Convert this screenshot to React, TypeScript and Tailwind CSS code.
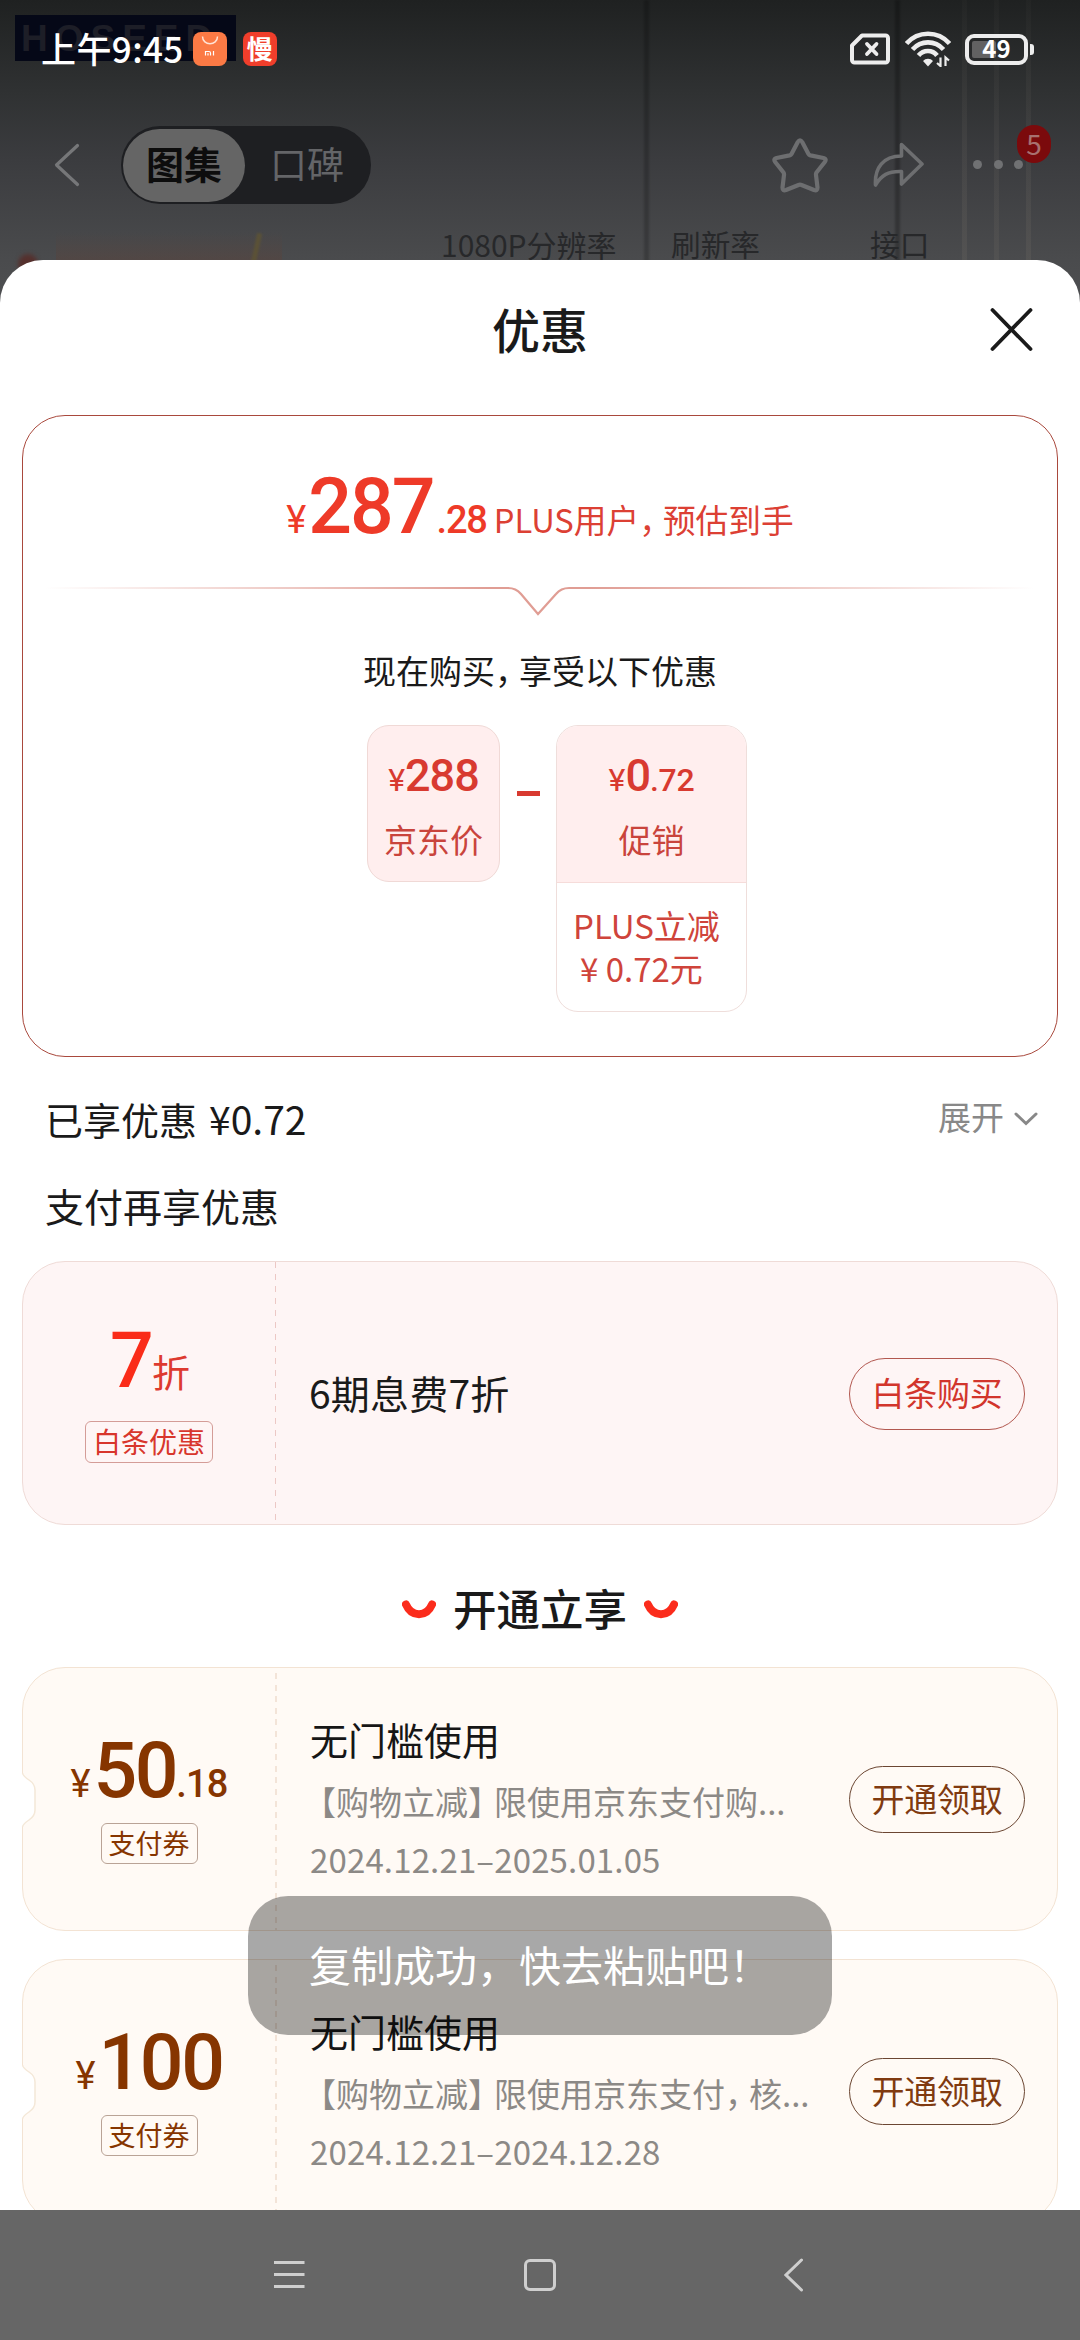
import type { ReactNode } from 'react';

function StatusBar() {
  return (
    <div className="relative flex h-[98px] items-center pl-[41px] pr-[46px] text-white">
      <span className="pb-[3px] text-[35px] font-medium leading-none tracking-[0.4px]">上午9:45</span>
      <svg className="ml-[9px]" width="34" height="34" viewBox="0 0 34 34">
        <rect width="34" height="34" rx="8" fill="#fb7a45" />
        <path d="M9.5 4.5c0 9.500 15 9.500 15 0" fill="none" stroke="#ffe3d5" strokeWidth="1.500" />
        <path d="M12.500 23.500v-4h3.500q1.500 0 1.500 1.500v2.500M15 23.500v-2.300M20.500 19v4.500" fill="none" stroke="#fff" strokeWidth="1.200" />
      </svg>
      <span className="ml-4 flex size-[34px] items-center justify-center rounded-[8px] bg-[#f03e2b] pb-[3px] text-[26px] font-bold leading-none">
        慢
      </span>
      <svg className="ml-auto" width="40" height="32" viewBox="0 0 40 32" fill="none" stroke="#ededed">
        <path d="M12 2.500H35.500a2.500 2.500 0 0 1 2.500 2.500V27a2.500 2.500 0 0 1-2.500 2.500H4.500A2.500 2.500 0 0 1 2 27V12.500Z" strokeWidth="4" strokeLinejoin="round" />
        <path d="M17 11l9.500 10M26.500 11l-9.500 10" strokeWidth="3.800" strokeLinecap="round" />
      </svg>
      <svg className="ml-[15px]" width="46" height="36" viewBox="0 0 46 36" fill="none" stroke="#ededed" strokeWidth="4.600">
        <path d="M1.500 12.500C13 -0.500 33 -0.500 44.500 12.500" />
        <path d="M7.500 18.500C16 9 30 9 38.500 18.500" />
        <path d="M13.500 24.500C18.500 18.500 27.500 18.500 32 24.500" />
        <path d="M18 30a6.500 6.500 0 0 1 10 0l-5 5.500z" fill="#ededed" stroke="none" />
        <path d="M35.500 26.500v8.500l-3.500-3M40.500 35v-8.500l3.500 3" strokeWidth="2.200" />
      </svg>
      <div className="ml-[14px] flex items-center">
        <div className="relative flex h-[31px] w-[63px] items-center justify-center rounded-[9px] border-[4px] border-[#ededed] p-[3px]">
          <span className="absolute left-[3px] top-[3px] h-[17px] w-[24px] rounded-[2px] bg-[#626262]" />
          <span className="relative pb-[2px] text-[24px] font-bold leading-none">49</span>
        </div>
        <span className="ml-[2px] h-[11px] w-[4px] rounded-r-[3px] bg-[#ededed]" />
      </div>
    </div>
  );
}

function Backdrop() {
  return (
    <div className="absolute inset-x-0 top-0 h-[320px] overflow-hidden bg-[linear-gradient(180deg,#1f2121_0px,#2f3132_90px,#3b3c3f_160px,#4a4b4d_260px,#505153_320px)]">
      <div className="absolute left-[15px] top-[15px] flex h-[46px] w-[221px] items-center overflow-hidden bg-[#050817] pl-[6px] font-['Liberation_Sans'] text-[37px] font-bold leading-none tracking-[7px] text-[#1d1e27]">
        HOSEED
      </div>
      <div className="absolute left-[644px] top-0 h-full w-[5px] bg-black/20 blur-[1px]" />
      <div className="absolute left-[895px] top-0 h-full w-[5px] bg-black/25 blur-[1px]" />
      <div className="absolute left-[962px] top-0 h-full w-[5px] bg-[linear-gradient(180deg,rgba(106,102,96,0.05),rgba(106,102,96,0.35))]" />
      <div className="absolute left-[994px] top-0 h-full w-[5px] bg-[linear-gradient(180deg,rgba(106,102,96,0.05),rgba(106,102,96,0.3))]" />
      <div className="absolute left-[1026px] top-0 h-full w-[5px] bg-[linear-gradient(180deg,rgba(106,102,96,0.05),rgba(106,102,96,0.35))]" />
      <div className="absolute left-[56px] top-[232px] h-[28px] w-[226px] bg-[linear-gradient(180deg,transparent,rgba(90,66,58,0.45))]" />
      <div className="absolute left-[254px] top-[233px] h-[30px] w-[5px] rotate-[12deg] bg-[#5e5432]/80 blur-[1px]" />
      <div className="absolute left-[18px] top-[254px] size-[20px] rounded-full bg-[#55302d] blur-[2px]" />
      <span className="absolute left-[441px] top-[229px] text-[30px] leading-none text-[#27282a]">1080P分辨率</span>
      <span className="absolute left-[671px] top-[229px] text-[29.7px] leading-none text-[#27282a]">刷新率</span>
      <span className="absolute left-[870px] top-[229px] text-[29.7px] leading-none text-[#27282a]">接口</span>
    </div>
  );
}

function TopBar() {
  return (
    <div className="relative flex h-[162px] pl-[54px]">
      <svg className="mt-[45px]" width="28" height="44" viewBox="0 0 28 44" fill="none" stroke="#767779" strokeWidth="3.200" strokeLinecap="round" strokeLinejoin="round">
        <path d="M23.500 2.500L2.500 22L23.500 41.500" />
      </svg>
      <div className="ml-[39px] mt-[28px] flex h-[78px] w-[250px] items-center rounded-full bg-[#1e1f22] p-[2px]">
        <span className="flex h-[73px] w-[122px] items-center justify-center rounded-full bg-[#656565] pb-1 text-[38px] font-bold leading-none text-[#0d0d0d]">图集</span>
        <span className="flex flex-1 items-center justify-center pb-1 text-[37px] leading-none text-[#646568]">口碑</span>
      </div>
      <svg className="ml-[401px] mt-[39px]" width="56" height="56" viewBox="0 0 56 56" fill="none" stroke="#6d6e70" strokeWidth="4.200" strokeLinejoin="round">
        <path d="M25.800 5Q28 1.500 30.200 5L36.500 17Q37 18 38.500 18.400L51.500 21Q55 22 52.800 25L44.500 35.500Q43.800 36.500 44 38L45.500 50.500Q45.500 54.300 42 53L29.500 48Q28 47.400 26.500 48L14 53Q10.500 54.300 10.500 50.500L12 38Q12.200 36.500 11.500 35.500L3.200 25Q1 22 4.500 21L17.500 18.400Q19 18 19.500 17Z" />
      </svg>
      <svg className="ml-[45px] mt-[44px]" width="52" height="46" viewBox="0 0 52 46" fill="none" stroke="#6d6e70" strokeWidth="3.600" strokeLinejoin="round">
        <path d="M28.500 2.500L49 22L28.500 42V29.500C15 29 8.500 33 2.500 43C1.500 26 10 14 28.500 14Z" />
      </svg>
      <div className="relative ml-[48px] mt-[62px] flex h-[10px] gap-[11.500px]">
        <span className="size-[9px] rounded-full bg-[#707173]" />
        <span className="size-[9px] rounded-full bg-[#707173]" />
        <span className="size-[9px] rounded-full bg-[#707173]" />
        <span className="absolute -top-[35px] left-[44px] flex h-[38px] w-[34px] items-center justify-center rounded-full bg-[#7b0a0c] pb-[3px] text-[28px] leading-none text-[#a7716f]">5</span>
      </div>
    </div>
  );
}

function Comma() {
  return <span className="tracking-[-9px]">，</span>;
}

function PriceCard() {
  return (
    <section className="mx-[22px] h-[642px] shrink-0 rounded-[43px] border border-[#a9493d]">
      <div className="flex h-[168px] justify-center pt-[64px] text-[#ee3a28]">
        <p className="whitespace-nowrap font-['Roboto'] text-[77px] font-medium leading-[55px]">
          <span className="mr-[2px] text-[38px] font-normal leading-none">¥</span>
          <span className="tracking-[-2px]">287</span>
          <span className="ml-[3px] text-[38px] leading-none tracking-[-1.200px]">.28</span>
          <span className="ml-[7px] font-['Noto_Sans_CJK_SC'] text-[32.7px] font-normal leading-none text-[#dc4034]">
            PLUS用户<Comma />预估到手
          </span>
        </p>
      </div>
      <svg className="ml-[22px]" width="990" height="34" viewBox="0 0 990 34" fill="none">
        <defs>
          <linearGradient id="fade" gradientUnits="userSpaceOnUse" x1="0" y1="0" x2="990" y2="0">
            <stop offset="0" stopColor="#e09d94" stopOpacity="0" />
            <stop offset="0.450" stopColor="#e09d94" />
            <stop offset="0.550" stopColor="#e09d94" />
            <stop offset="1" stopColor="#e09d94" stopOpacity="0" />
          </linearGradient>
        </defs>
        <path d="M0 4H463Q471 4 476 10L493 30L511 10Q516 4 524 4H990" stroke="url(#fade)" strokeWidth="2.200" />
      </svg>
      <p className="mb-[31px] mt-[21px] h-[55px] text-center text-[33px] leading-[62px] text-[#1a1a1a]">
        现在购买<Comma />享受以下优惠
      </p>
      <div className="flex items-start pl-[344px] text-[#d83a30]">
        <div className="flex h-[157px] w-[133px] flex-col items-center rounded-[22px] border border-[#f0d9d6] bg-[#ffeeee]">
          <p className="mt-[30px] h-[51px] whitespace-nowrap font-['Roboto'] text-[45px] font-medium leading-[40px]">
            <span className="text-[32px] font-normal leading-none">¥</span>
            <span className="tracking-[-1px]">288</span>
          </p>
          <p className="text-[33px] leading-[64px] text-[#c9443c]">京东价</p>
        </div>
        <span className="ml-[17px] mt-[66px] h-[5px] w-[23px] bg-[#d83a30]" />
        <div className="ml-[16px] h-[287px] w-[191px] overflow-hidden rounded-[22px] border border-[#efdedb] bg-white">
          <div className="flex h-[157px] flex-col items-center border-b border-[#f6dcda] bg-[#ffeeee]">
            <p className="mt-[30px] h-[51px] whitespace-nowrap font-['Roboto'] text-[45px] font-medium leading-[40px]">
              <span className="text-[32px] font-normal leading-none">¥</span>
              <span className="tracking-[-1px]">0</span>
              <span className="text-[32px] leading-none tracking-[-0.300px]">.72</span>
            </p>
            <p className="text-[33px] leading-[64px] text-[#c9443c]">促销</p>
          </div>
          <div className="pt-[21px] text-[33px] leading-[43px] text-[#cf443b]">
            <p className="pl-[16px]">PLUS立减</p>
            <p className="pl-[23px]">¥ 0.72元</p>
          </div>
        </div>
      </div>
    </section>
  );
}

function DashedLine({ color }: { color: 'rose' | 'sand' }) {
  return color === 'rose' ? (
    <span className="h-full w-px bg-[repeating-linear-gradient(180deg,#ecc8c5_0px,#ecc8c5_6px,transparent_6px,transparent_12px)]" />
  ) : (
    <span className="h-full w-[2px] bg-[repeating-linear-gradient(180deg,transparent_0px,transparent_5px,#f3e4d8_5px,#f3e4d8_11px,transparent_11px,transparent_11.6px)]" />
  );
}

function Notch() {
  return (
    <svg className="absolute -left-[2px] top-[104px]" width="18" height="56" viewBox="0 0 18 56">
      <path d="M0 1H1.500Q2 4 8 8Q14 12 14 18V38Q14 44 8 48Q2 52 1.500 55H0Z" fill="#fff" />
      <path d="M1.500 1Q2 4 8 8Q14 12 14 18V38Q14 44 8 48Q2 52 1.500 55" fill="none" stroke="#f4e8d8" strokeWidth="1.500" />
    </svg>
  );
}

type VoucherProps = { amount: ReactNode; desc: ReactNode; dates: string };

function Voucher({ amount, desc, dates }: VoucherProps) {
  return (
    <section className="relative mx-[22px] flex h-[264px] shrink-0 rounded-[43px] border border-[#f3e3d3] bg-[#fffaf5]">
      <Notch />
      <div className="flex w-[252px] flex-col items-center pt-[76px] text-[#863500]">
        <p className="h-[54px] whitespace-nowrap font-['Roboto'] text-[77px] font-medium leading-[55px]">
          <span className="mr-[3px] text-[38px] font-normal leading-none">¥</span>
          <span className="tracking-[-2.400px]">{amount}</span>
        </p>
        <span className="mt-[25px] flex h-[41px] w-[97px] items-center justify-center rounded-[6px] border border-[#b9a396] pb-[3px] text-[27px] leading-none">
          支付券
        </span>
      </div>
      <DashedLine color="sand" />
      <div className="flex-1 whitespace-nowrap pl-[33px] pt-[40px]">
        <p className="text-[38px] leading-[61px] text-[#161616]">无门槛使用</p>
        <p className="text-[33px] leading-[64px] text-[#8c8986]">
          <span className="-ml-[7px]">【</span>购物立减<span className="tracking-[-7px]">】</span>
          {desc}
        </p>
        <p className="text-[33px] leading-[52px] tracking-[0.150px] text-[#8c8986]">{dates}</p>
      </div>
      <button className="mr-[32px] mt-[98px] h-[67px] w-[176px] rounded-full border border-[#6b4632] pb-[3px] text-[33px] leading-none tracking-[-0.300px] text-[#803a10]">
        开通领取
      </button>
    </section>
  );
}

function Smile() {
  return (
    <svg width="34" height="20" viewBox="0 0 34 20" fill="none">
      <path d="M4 4.500C9.500 17.500 24.500 17.500 30 4.500" stroke="#fb2c1c" strokeWidth="8" strokeLinecap="round" />
    </svg>
  );
}

function Sheet() {
  return (
    <main className="relative flex h-[1950px] flex-col overflow-hidden rounded-t-[43px] bg-white text-[#1a1a1a]">
      <header className="relative flex h-[155px] shrink-0 justify-center">
        <h1 className="text-[48px] font-medium leading-[136px]">优惠</h1>
        <svg className="absolute left-[989px] top-[46px]" width="45" height="46" viewBox="0 0 45 46" stroke="#1a1a1a" strokeWidth="3.800" strokeLinecap="round">
          <path d="M3.500 4L41.500 43M41.500 4L3.500 43" />
        </svg>
      </header>
      <PriceCard />
      <div className="mt-[17px] flex h-[88px] shrink-0 items-center pl-[45px] pr-[42px]">
        <span className="text-[38px] leading-none">
          已享优惠<span className="ml-[12px] text-[39px]">¥0.72</span>
        </span>
        <span className="ml-auto pb-[4px] text-[33px] leading-none text-[#888]">展开</span>
        <svg className="ml-[10px] mt-[1px]" width="24" height="14" viewBox="0 0 24 14" fill="none" stroke="#888" strokeWidth="3" strokeLinecap="round">
          <path d="M2 2L12 11.500L22 2" />
        </svg>
      </div>
      <h2 className="h-[99px] shrink-0 pl-[45px] text-[39px] leading-[86px]">支付再享优惠</h2>
      <section className="mx-[22px] flex h-[264px] shrink-0 rounded-[43px] border border-[#efdbd7] bg-[#fef5f5]">
        <div className="flex w-[252px] flex-col items-center pt-[72px] text-[#fa2c19]">
          <p className="h-[54px] whitespace-nowrap font-['Roboto'] text-[77px] font-medium leading-[55px] tracking-[-2px]">
            7<span className="font-['Noto_Sans_CJK_SC'] text-[38px] font-normal leading-none text-[#dd3a2f]">折</span>
          </p>
          <span className="mt-[33px] flex h-[42px] w-[128px] items-center justify-center rounded-[6px] border border-[#d49c97] pb-[3px] text-[28px] leading-none text-[#d8362c]">
            白条优惠
          </span>
        </div>
        <DashedLine color="rose" />
        <span className="flex-1 pl-[33px] text-[39px] leading-[261px] tracking-[0.200px]">6期息费7折</span>
        <button className="mr-[32px] mt-[96px] h-[72px] w-[176px] rounded-full border border-[#b2574f] pb-[3px] text-[33px] leading-none tracking-[-0.300px] text-[#d2352c]">
          白条购买
        </button>
      </section>
      <div className="flex h-[142px] shrink-0 items-center justify-center gap-[17px] pt-[27px]">
        <Smile />
        <h2 className="pb-[3px] text-[43.5px] font-medium leading-none">开通立享</h2>
        <Smile />
      </div>
      <Voucher
        amount={<>50<span className="text-[38px] font-medium leading-none tracking-[-0.800px]">.18</span></>}
        desc="限使用京东支付购..."
        dates="2024.12.21–2025.01.05"
      />
      <div className="h-[28px] shrink-0" />
      <Voucher amount="100" desc={<>限使用京东支付<Comma />核...</>} dates="2024.12.21–2024.12.28" />
    </main>
  );
}

function NavBar() {
  return (
    <nav className="flex h-[130px] items-center bg-[#666] pl-[274px]">
      <svg width="31" height="34" viewBox="0 0 31 34" stroke="#cfcfcf" strokeWidth="3">
        <path d="M0 4.500H30.500M0 16.500H30.500M0 28.500H30.500" />
      </svg>
      <span className="ml-[219px] size-[32px] rounded-[6px] border-[3px] border-[#cfcfcf]" />
      <svg className="ml-[228px]" width="20" height="34" viewBox="0 0 20 34" fill="none" stroke="#cfcfcf" strokeWidth="3" strokeLinecap="round">
        <path d="M17.500 2L2 17L17.500 32" />
      </svg>
    </nav>
  );
}

export default function App() {
  return (
    <div className="relative h-[2340px] w-[1080px] overflow-hidden bg-[#505153] font-['Noto_Sans_CJK_SC',sans-serif]">
      <Backdrop />
      <StatusBar />
      <TopBar />
      <Sheet />
      <NavBar />
      <div className="absolute left-[248px] top-[1896px] flex h-[139px] w-[584px] items-center justify-center rounded-[40px] bg-black/[0.340] pb-[4px] text-[42px] leading-none text-white">
        复制成功，快去粘贴吧！
      </div>
    </div>
  );
}
